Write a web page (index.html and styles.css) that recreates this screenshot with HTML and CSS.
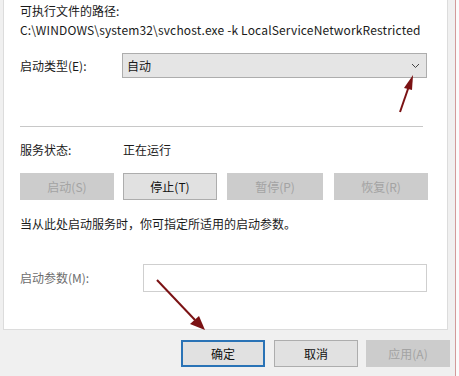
FILE: index.html
```html
<!DOCTYPE html>
<html lang="zh-CN">
<head>
<meta charset="utf-8">
<title>服务属性</title>
<link rel="stylesheet" href="styles.css">
</head>
<body>
<div class="screen">
  <div class="main">
    <div class="panel">
      <div class="line">可执行文件的路径:</div>
      <div class="line path">C:\WINDOWS\system32\svchost.exe -k LocalServiceNetworkRestricted</div>
      <div class="row type-row">
        <div class="label">启动类型(E):</div>
        <div class="select">
          <span>自动</span>
          <svg class="chev" width="9" height="6" viewBox="0 0 9 6"><path d="M1 1 L4.5 4.5 L8 1" fill="none" stroke="#444" stroke-width="1"/></svg>
        </div>
      </div>
      <div class="sep"></div>
      <div class="row status-row">
        <div class="label">服务状态:</div>
        <div>正在运行</div>
      </div>
      <div class="btn-row">
        <div class="btn disabled">启动(S)</div>
        <div class="btn">停止(T)</div>
        <div class="btn disabled">暂停(P)</div>
        <div class="btn disabled">恢复(R)</div>
      </div>
      <div class="line hint">当从此处启动服务时，你可指定所适用的启动参数。</div>
      <div class="row param-row">
        <div class="label muted">启动参数(M):</div>
        <div class="input"></div>
      </div>
    </div>
    <div class="footer">
      <div class="btn fbtn primary">确定</div>
      <div class="btn fbtn">取消</div>
      <div class="btn fbtn disabled">应用(A)</div>
    </div>
  </div>
  <div class="edge"></div>
  <svg class="arrows" width="459" height="376" viewBox="0 0 459 376">
    <g stroke="#7b1214" stroke-width="2" fill="#7b1214">
      <line x1="400" y1="112" x2="409" y2="86"/>
      <polygon points="413,75 404,88 412,90" stroke="none"/>
      <line x1="157" y1="280" x2="195" y2="320"/>
      <polygon points="205,330 190,324 199,316" stroke="none"/>
    </g>
  </svg>
</div>
</body>
</html>
```
FILE: styles.css
```css
* { box-sizing: border-box; }
html, body {
  margin: 0;
  padding: 0;
  background: #f0f0f0;
}
body {
  font-family: "Noto Sans CJK SC", "Noto Sans", sans-serif;
  font-size: 12px;
  color: #1a1a1a;
}
.screen {
  position: relative;
  display: flex;
  width: 459px;
  height: 376px;
  overflow: hidden;
}
.main {
  width: 455px;
  display: flex;
  flex-direction: column;
  background: #f0f0f0;
}
.edge {
  flex: 1;
  border-left: 1px solid #d39a9a;
  background: #fbfbfb;
}
.panel {
  margin-left: 3px;
  width: 445px;
  height: 330px;
  background: #fff;
  border-left: 1px solid #dcdcdc;
  border-right: 1px solid #dcdcdc;
  border-bottom: 1px solid #dcdcdc;
  padding: 1px 19px 0 16px;
}
.line {
  line-height: 19px;
  height: 19px;
  white-space: nowrap;
}
.path { letter-spacing: 0.16px; }
.row {
  display: flex;
  align-items: center;
}
.label {
  width: 102px;
  flex: none;
}
.type-row { margin-top: 14px; }
.type-row .label { padding-bottom: 1px; }
.select {
  width: 305px;
  height: 25px;
  background: #e5e5e5;
  border: 1px solid #adadad;
  display: flex;
  align-items: center;
  justify-content: space-between;
  padding: 0 6px 1px 4px;
}
.chev { margin-top: 1px; }
.sep {
  margin-top: 48px;
  height: 1px;
  width: 403px;
  background: #c8c8c8;
}
.status-row {
  margin-top: 13px;
  height: 19px;
}
.status-row .label { width: 103px; }
.btn-row {
  margin-top: 14px;
  display: flex;
  gap: 9px;
}
.btn {
  width: 94px;
  height: 27px;
  display: flex;
  align-items: center;
  justify-content: center;
  background: #e1e1e1;
  border: 1px solid #adadad;
  color: #111;
  padding-bottom: 1px;
}
.btn.disabled {
  background: #cccccc;
  border-color: #cccccc;
  color: #a3a3a3;
}
.btn-row .btn:nth-child(3) { width: 96px; margin-left: 1px; }
.btn-row .btn:nth-child(4) { margin-left: 2px; }
.hint { margin-top: 14px; }
.param-row { margin-top: 31px; }
.param-row .label { width: 123px; padding-bottom: 1px; }
.muted { color: #6d6d6d; }
.input {
  width: 284px;
  height: 28px;
  background: #fff;
  border: 1px solid #cfcfcf;
}
.footer {
  margin-top: 10px;
  display: flex;
  justify-content: flex-end;
  gap: 8px;
  padding-right: 5px;
}
.fbtn { width: 84px; }
.fbtn.primary {
  border: 2px solid #2a73b6;
}
.fbtn:nth-child(2) { margin-left: 1px; }
.arrows {
  position: absolute;
  left: 0;
  top: 0;
  pointer-events: none;
}
```
